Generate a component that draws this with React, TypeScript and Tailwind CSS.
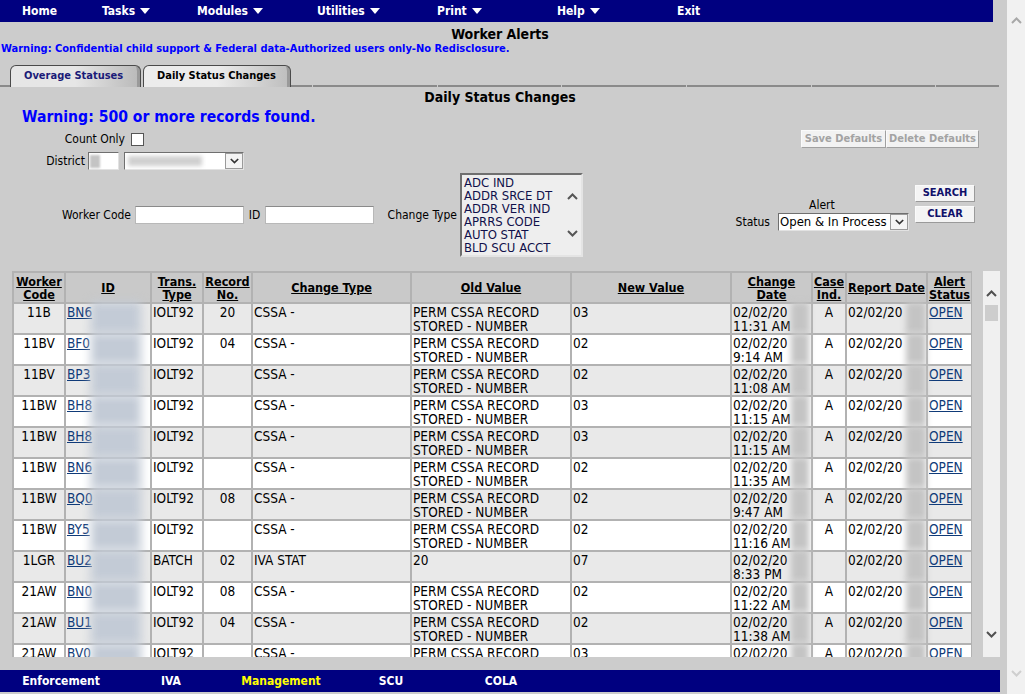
import React from "react";

type Row = {
  wc: string;
  id: string;
  tt: string;
  rec: string;
  ct: string;
  old: string[];
  nv: string;
  time: string;
  ci: string;
};

const perm = ["PERM CSSA RECORD", "STORED - NUMBER"];

const rows: Row[] = [
  { wc: "11B", id: "BN6", tt: "IOLT92", rec: "20", ct: "CSSA -", old: perm, nv: "03", time: "11:31 AM", ci: "A" },
  { wc: "11BV", id: "BF0", tt: "IOLT92", rec: "04", ct: "CSSA -", old: perm, nv: "02", time: "9:14 AM", ci: "A" },
  { wc: "11BV", id: "BP3", tt: "IOLT92", rec: "", ct: "CSSA -", old: perm, nv: "02", time: "11:08 AM", ci: "A" },
  { wc: "11BW", id: "BH8", tt: "IOLT92", rec: "", ct: "CSSA -", old: perm, nv: "03", time: "11:15 AM", ci: "A" },
  { wc: "11BW", id: "BH8", tt: "IOLT92", rec: "", ct: "CSSA -", old: perm, nv: "03", time: "11:15 AM", ci: "A" },
  { wc: "11BW", id: "BN6", tt: "IOLT92", rec: "", ct: "CSSA -", old: perm, nv: "02", time: "11:35 AM", ci: "A" },
  { wc: "11BW", id: "BQ0", tt: "IOLT92", rec: "08", ct: "CSSA -", old: perm, nv: "02", time: "9:47 AM", ci: "A" },
  { wc: "11BW", id: "BY5", tt: "IOLT92", rec: "", ct: "CSSA -", old: perm, nv: "02", time: "11:16 AM", ci: "A" },
  { wc: "1LGR", id: "BU2", tt: "BATCH", rec: "02", ct: "IVA STAT", old: ["20"], nv: "07", time: "8:33 PM", ci: "" },
  { wc: "21AW", id: "BN0", tt: "IOLT92", rec: "08", ct: "CSSA -", old: perm, nv: "02", time: "11:22 AM", ci: "A" },
  { wc: "21AW", id: "BU1", tt: "IOLT92", rec: "04", ct: "CSSA -", old: perm, nv: "02", time: "11:38 AM", ci: "A" },
  { wc: "21AW", id: "BV0", tt: "IOLT92", rec: "", ct: "CSSA -", old: perm, nv: "03", time: "11:40 AM", ci: "A" },
];

const topNav: [string, number, boolean][] = [
  ["Home", 80, false],
  ["Tasks", 95, true],
  ["Modules", 120, true],
  ["Utilities", 120, true],
  ["Print", 120, true],
  ["Help", 120, true],
  ["Exit", 120, false],
];

const Chevron = ({ up = false, className = "" }: { up?: boolean; className?: string }) => (
  <svg width="11" height="7" viewBox="0 0 11 7" className={className}>
    <polyline
      points={up ? "1,6 5.5,1.5 10,6" : "1,1 5.5,5.5 10,1"}
      fill="none"
      stroke="currentColor"
      strokeWidth="2"
    />
  </svg>
);

const NavArrow = () => (
  <svg width="10" height="6" viewBox="0 0 10 6" className="ml-[5px]">
    <polygon points="0,0 10,0 5,6" fill="#ffffff" />
  </svg>
);

const SelectBox = ({ width, children }: { width: string; children: React.ReactNode }) => (
  <div className={`${width} h-[18px] flex bg-white border border-t-[#6f6f6f] border-l-[#6f6f6f] border-r-[#e2e2e2] border-b-[#e2e2e2]`}>
    <div className="flex-1 overflow-hidden flex items-center pl-[1px]">{children}</div>
    <div className="w-[18px] flex items-center justify-center bg-[#f4f4f4] border border-[#9a9a9a] text-[#333]">
      <Chevron className="w-[9px] h-[6px]" />
    </div>
  </div>
);

const cell = "border-2 border-[#b2b2b2] align-top pt-[1px]";

export default function App() {
  return (
    <div className="flex w-[1025px] h-[694px] overflow-hidden font-['DejaVu_Sans_Condensed','DejaVu_Sans',sans-serif] text-black">
      {/* page */}
      <div className="w-[1007px] h-full bg-[#cccccc] flex flex-col">
        {/* top menu */}
        <div className="w-[993px] h-[22px] shrink-0 bg-[#000080] flex items-center pl-[22px] text-white font-bold text-[12px]">
          {topNav.map(([label, w, arrow]) => (
            <div key={label} className="flex items-center shrink-0" style={{ width: w }}>
              <span>{label}</span>
              {arrow && <NavArrow />}
            </div>
          ))}
        </div>

        <div className="w-[1000px] h-[21px] flex items-end justify-center font-bold text-[14px] leading-[17px]">
          Worker Alerts
        </div>
        <div className="h-[12px] pl-[1px] text-[11px] leading-[12px] font-bold text-[#0000ff] whitespace-nowrap">
          Warning: Confidential child support &amp; Federal data-Authorized users only-No Redisclosure.
        </div>

        {/* tabs */}
        <div className="mt-[9px] h-[23px] flex items-end">
          <div className="w-[10px] h-[2px] bg-[#8a8a8a]" />
          <div className="w-[131px] h-[22px] rounded-t-[6px] border border-b-0 border-[#4a4a4a] bg-gradient-to-r from-[#e6e6e6] via-[#e6e6e6] to-[#b9b9b9] flex items-center pl-[13px] text-[11px] font-bold text-[#1b1b78] shadow-[inset_-8px_0_0_-5px_#9a9a9a]">
            Overage Statuses
          </div>
          <div className="w-[2px]" />
          <div className="w-[148px] h-[22px] rounded-t-[6px] border border-b-0 border-[#4a4a4a] bg-gradient-to-r from-[#ececec] via-[#ececec] to-[#bdbdbd] flex items-center pl-[13px] text-[11px] font-bold text-black shadow-[inset_-8px_0_0_-5px_#9a9a9a]">
            Daily Status Changes
          </div>
          <div className="flex-1 flex gap-[1px] pr-[8px]">
            {[21, 124, 123, 124, 124, 123, 63].map((w, i) => (
              <div key={i} className="h-[2px] bg-[#8a8a8a]" style={{ width: w }} />
            ))}
          </div>
        </div>

        <div className="w-[1000px] h-[20px] flex items-center justify-center font-bold text-[14px]">
          Daily Status Changes
        </div>
        <div className="h-[21px] pl-[22px] flex items-center font-bold text-[15.6px] text-[#0000ff] whitespace-nowrap">
          Warning: 500 or more records found.
        </div>

        {/* count only / save defaults */}
        <div className="h-[20px] mt-[1px] flex items-center text-[12px]">
          <div className="w-[125px] text-right">Count Only</div>
          <div className="ml-[6px] w-[13px] h-[13px] bg-white border border-[#555]" />
          <div className="ml-[657px] flex text-[11px] font-bold text-[#a3a3a3]">
            <div className="w-[85px] h-[18px] flex items-center justify-center bg-[#f2f2f2] border border-[#fafafa] border-r-[#a0a0a0] border-b-[#a0a0a0]">
              Save Defaults
            </div>
            <div className="w-[93px] h-[18px] flex items-center justify-center bg-[#f2f2f2] border border-[#fafafa] border-r-[#a0a0a0] border-b-[#a0a0a0]">
              Delete Defaults
            </div>
          </div>
        </div>

        {/* district */}
        <div className="h-[20px] mt-[2px] flex items-center text-[12px]">
          <div className="w-[85px] text-right">District</div>
          <div className="ml-[3px] w-[31px] h-[18px] bg-white border border-t-[#6f6f6f] border-l-[#6f6f6f] border-r-[#e2e2e2] border-b-[#e2e2e2] flex items-center pl-[1px]">
            <div className="w-[10px] h-[13px] bg-[#c4c4c4] blur-[1px]" />
          </div>
          <div className="ml-[5px]">
            <SelectBox width="w-[120px]">
              <div className="w-[74px] h-[10px] ml-[2px] bg-[#d0d0d0] blur-[2px]" />
            </SelectBox>
          </div>
        </div>

        {/* worker code row */}
        <div className="h-[84px] mt-[2px] flex items-center text-[12px]">
          <div className="w-[131px] text-right">Worker Code</div>
          <div className="ml-[4px] w-[109px] h-[18px] bg-white border border-[#b8b8b8] border-t-[#8a8a8a]" />
          <div className="w-[21px] text-center">ID</div>
          <div className="w-[109px] h-[18px] bg-white border border-[#b8b8b8] border-t-[#8a8a8a]" />
          <div className="w-[86px] text-right pr-[3px]">Change Type</div>
          <div className="w-[123px] h-[84px] flex bg-[#eeeeee] border-2 border-t-[#6f6f6f] border-l-[#6f6f6f] border-r-[#e4e4e4] border-b-[#e4e4e4]">
            <div className="flex-1 pl-[2px] pt-[1px] text-[#10104a] leading-[13px] text-[13px] whitespace-nowrap overflow-hidden">
              <div>ADC IND</div>
              <div>ADDR SRCE DT</div>
              <div>ADDR VER IND</div>
              <div>APRRS CODE</div>
              <div>AUTO STAT</div>
              <div>BLD SCU ACCT</div>
            </div>
            <div className="w-[17px] flex flex-col justify-between items-center py-[18px] text-[#555]">
              <Chevron up />
              <Chevron />
            </div>
          </div>
          <div className="w-[152px]" />
          <div className="self-start mt-[25px] w-[174px]">
            <div className="pl-[74px] h-[15px] leading-[14px]">Alert</div>
            <div className="flex items-center">
              <div className="w-[43px] text-right pr-[8px]">Status</div>
              <SelectBox width="w-[131px]">
                <span className="text-[13px] whitespace-nowrap">Open &amp; In Process</span>
              </SelectBox>
            </div>
          </div>
          <div className="self-start mt-[12px] ml-[6px] flex flex-col gap-[4px] text-[11px] font-bold text-[#10106a]">
            <div className="w-[60px] h-[17px] flex items-center justify-center bg-[#f4f4f4] border border-[#fafafa] border-r-[#9a9a9a] border-b-[#9a9a9a]">
              SEARCH
            </div>
            <div className="w-[60px] h-[17px] flex items-center justify-center bg-[#f4f4f4] border border-[#fafafa] border-r-[#9a9a9a] border-b-[#9a9a9a]">
              CLEAR
            </div>
          </div>
        </div>

        {/* results */}
        <div className="mt-[14px] h-[386px] shrink-0 flex pl-[12px]">
          <div className="w-[960px] h-full overflow-hidden">
            <table className="w-[959px] table-fixed border-collapse text-[13.5px]">
              <colgroup>
                {[52, 86, 52, 49, 159, 160, 160, 81, 34, 81, 45].map((w, i) => (
                  <col key={i} style={{ width: w }} />
                ))}
              </colgroup>
              <thead>
                <tr className="h-[31px] bg-[#c9c9c9] text-[12.5px] font-bold leading-[13px]">
                  {[
                    ["Worker", "Code"],
                    ["ID"],
                    ["Trans.", "Type"],
                    ["Record", "No."],
                    ["Change Type"],
                    ["Old Value"],
                    ["New Value"],
                    ["Change", "Date"],
                    ["Case", "Ind."],
                    ["Report Date"],
                    ["Alert", "Status"],
                  ].map((h, i) => (
                    <th key={i} className="border-2 border-[#b2b2b2] p-0 text-center align-middle underline whitespace-nowrap overflow-hidden">
                      {h.map((l) => (
                        <div key={l}>{l}</div>
                      ))}
                    </th>
                  ))}
                </tr>
              </thead>
              <tbody>
                {rows.map((r, i) => (
                  <tr key={i} className={`h-[29px] leading-[14px] ${i % 2 === 0 ? "bg-[#e9e9e9]" : "bg-white"}`}>
                    <td className={`${cell} text-center`}>{r.wc}</td>
                    <td className={`${cell} relative pl-[1px]`}>
                      <span className="underline text-[#0f3a78]">{r.id}</span>
                      <span className="absolute left-[25px] top-[-2px] w-[50px] h-[31px] bg-[#c3cbd6] blur-[5px]" />
                    </td>
                    <td className={`${cell} pl-[1px]`}>{r.tt}</td>
                    <td className={`${cell} text-center`}>{r.rec}</td>
                    <td className={`${cell} pl-[1px]`}>{r.ct}</td>
                    <td className={`${cell} pl-[1px] whitespace-nowrap`}>
                      {r.old.map((l) => (
                        <div key={l}>{l}</div>
                      ))}
                    </td>
                    <td className={`${cell} pl-[1px]`}>{r.nv}</td>
                    <td className={`${cell} relative pl-[1px] whitespace-nowrap`}>
                      <div>02/02/20</div>
                      <div>{r.time}</div>
                      <span className="absolute left-[59px] top-[-2px] w-[18px] h-[31px] bg-[#c4c4c4] blur-[3px]" />
                    </td>
                    <td className={`${cell} text-center`}>{r.ci}</td>
                    <td className={`${cell} relative pl-[1px] whitespace-nowrap`}>
                      <div>02/02/20</div>
                      <span className="absolute left-[59px] top-[-2px] w-[20px] h-[31px] bg-[#c4c4c4] blur-[3px]" />
                    </td>
                    <td className={`${cell} pl-[1px]`}>
                      <span className="underline text-[#0f3a78]">OPEN</span>
                    </td>
                  </tr>
                ))}
              </tbody>
            </table>
          </div>
          {/* inner scrollbar */}
          <div className="ml-[11px] w-[17px] h-full bg-[#f0f0f0] flex flex-col items-center text-[#505050]">
            <div className="h-[34px] flex items-end justify-center pb-[8px]">
              <Chevron up />
            </div>
            <div className="w-[13px] h-[16px] bg-[#cdcdcd]" />
            <div className="flex-1" />
            <div className="h-[34px] flex items-start justify-center pt-[8px]">
              <Chevron />
            </div>
          </div>
        </div>

        {/* bottom menu */}
        <div className="mt-[13px] w-[1000px] h-[22px] shrink-0 bg-[#000080] flex items-center pl-[6px] text-[12px] font-bold text-white">
          {["Enforcement", "IVA", "Management", "SCU", "COLA"].map((l) => (
            <div key={l} className={`w-[110px] text-center ${l === "Management" ? "text-[#ffff00]" : ""}`}>
              {l}
            </div>
          ))}
        </div>
      </div>

      {/* window scrollbar */}
      <div className="w-[18px] h-full bg-[#f1f1f1] flex flex-col items-center justify-between py-[17px] text-[#a8a8a8]">
        <Chevron up />
        <Chevron className="text-[#cfcfcf]" />
      </div>
    </div>
  );
}
